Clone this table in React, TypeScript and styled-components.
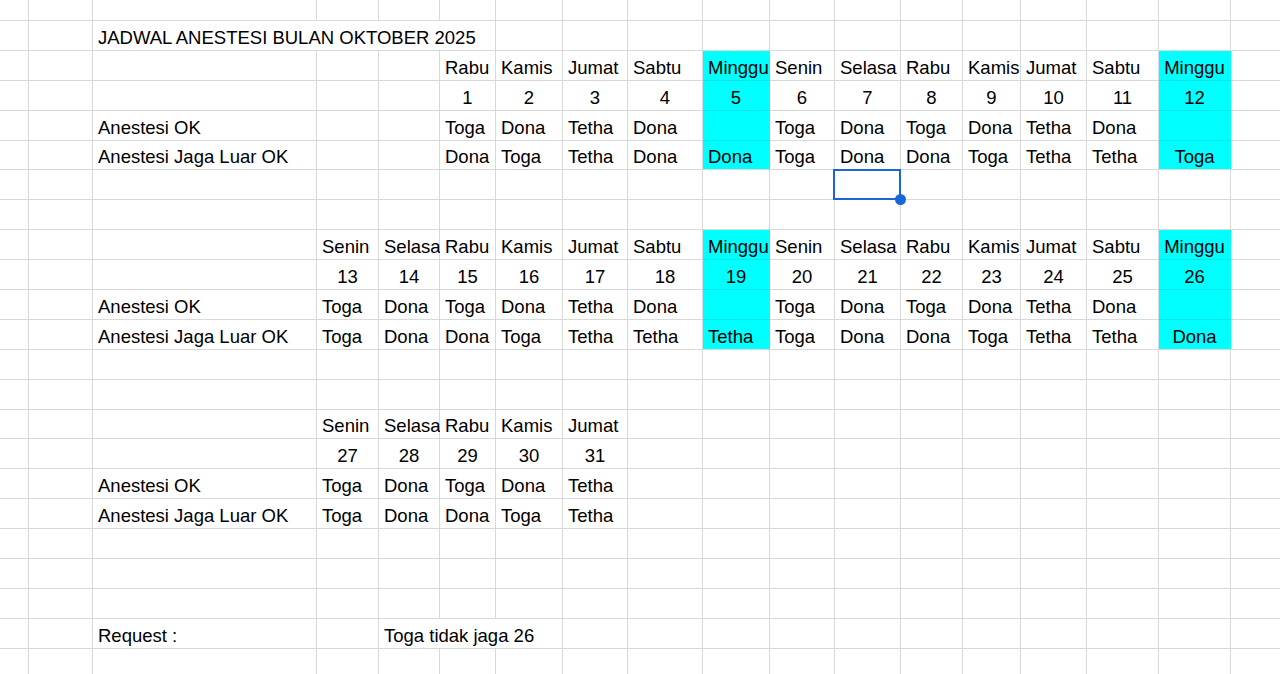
import React from "react";
import styled, { createGlobalStyle } from "styled-components";

const COLS = [29, 64, 224, 62, 61, 56, 67, 65, 75, 67, 65, 66, 62, 58, 66, 72, 72, 50];
const GRID = "#d9d9d9";
const CYAN = "#00ffff";

type Spec = {
  t?: string;
  a?: "l" | "c";
  cyan?: boolean;
  cyanEnd?: boolean;
  span?: number;
  sel?: boolean;
};

type Row = Record<number, Spec>;

const GlobalStyle = createGlobalStyle`
  html, body {
    margin: 0;
    padding: 0;
    background: #fff;
    overflow: hidden;
  }
  body {
    font-family: "Liberation Sans", Arial, Helvetica, sans-serif;
    color: #000;
  }
`;

const Sheet = styled.div`
  display: grid;
  grid-template-columns: ${COLS.map((w) => `${w}px`).join(" ")};
  grid-template-rows: 21px repeat(22, 29.9px);
  width: 1280px;
  height: 674px;
  overflow: hidden;
`;

const Cell = styled.div<{ $align: "l" | "c"; $cyan?: boolean; $cyanEnd?: boolean; $span: number }>`
  position: relative;
  box-sizing: border-box;
  grid-column: span ${(p) => p.$span};
  display: flex;
  align-items: flex-end;
  justify-content: ${(p) => (p.$align === "c" ? "center" : "flex-start")};
  padding: 0 1px 2px ${(p) => (p.$align === "c" ? "1px" : "5px")};
  border-right: 1px solid ${(p) => (p.$cyan ? CYAN : GRID)};
  border-bottom: 1px solid ${(p) => (p.$cyan && !p.$cyanEnd ? "#00e8e8" : GRID)};
  background: ${(p) => (p.$cyan ? CYAN : "#fff")};
  font-size: 18.5px;
  line-height: 20px;
  white-space: nowrap;
  overflow: visible;
`;

const Selection = styled.div`
  position: absolute;
  z-index: 2;
  left: -2px;
  top: -1px;
  right: -1px;
  bottom: -1px;
  border: 2px solid #1a66d6;
  pointer-events: none;
  &::after {
    content: "";
    position: absolute;
    right: -7px;
    bottom: -7px;
    width: 11px;
    height: 11px;
    border-radius: 50%;
    background: #1a66d6;
  }
`;

const block = (
  start: number,
  days: string[],
  nums: number[],
  ok: string[],
  luar: string[]
): Row[] => {
  const rows: Row[] = [{}, {}, { 2: { t: "Anestesi OK" } }, { 2: { t: "Anestesi Jaga Luar OK" } }];
  days.forEach((d, i) => {
    const col = start + i;
    const cyan = d === "Minggu";
    const center = cyan && col === 16;
    rows[0][col] = { t: d, cyan, a: center ? "c" : "l" };
    rows[1][col] = { t: String(nums[i]), cyan, a: "c" };
    rows[2][col] = { t: ok[i], cyan, a: center ? "c" : "l" };
    rows[3][col] = { t: luar[i], cyan, cyanEnd: true, a: center ? "c" : "l" };
  });
  return rows;
};

const ROWS: Row[] = [
  {},
  { 2: { t: "JADWAL ANESTESI BULAN OKTOBER 2025", span: 4 } },
  ...block(
    5,
    ["Rabu", "Kamis", "Jumat", "Sabtu", "Minggu", "Senin", "Selasa", "Rabu", "Kamis", "Jumat", "Sabtu", "Minggu"],
    [1, 2, 3, 4, 5, 6, 7, 8, 9, 10, 11, 12],
    ["Toga", "Dona", "Tetha", "Dona", "", "Toga", "Dona", "Toga", "Dona", "Tetha", "Dona", ""],
    ["Dona", "Toga", "Tetha", "Dona", "Dona", "Toga", "Dona", "Dona", "Toga", "Tetha", "Tetha", "Toga"]
  ),
  { 11: { sel: true } },
  {},
  ...block(
    3,
    ["Senin", "Selasa", "Rabu", "Kamis", "Jumat", "Sabtu", "Minggu", "Senin", "Selasa", "Rabu", "Kamis", "Jumat", "Sabtu", "Minggu"],
    [13, 14, 15, 16, 17, 18, 19, 20, 21, 22, 23, 24, 25, 26],
    ["Toga", "Dona", "Toga", "Dona", "Tetha", "Dona", "", "Toga", "Dona", "Toga", "Dona", "Tetha", "Dona", ""],
    ["Toga", "Dona", "Dona", "Toga", "Tetha", "Tetha", "Tetha", "Toga", "Dona", "Dona", "Toga", "Tetha", "Tetha", "Dona"]
  ),
  {},
  {},
  ...block(
    3,
    ["Senin", "Selasa", "Rabu", "Kamis", "Jumat"],
    [27, 28, 29, 30, 31],
    ["Toga", "Dona", "Toga", "Dona", "Tetha"],
    ["Toga", "Dona", "Dona", "Toga", "Tetha"]
  ),
  {},
  {},
  {},
  { 2: { t: "Request :" }, 4: { t: "Toga tidak jaga 26", span: 3 } },
  {},
];

const renderRow = (row: Row, r: number) => {
  const cells: React.ReactNode[] = [];
  let c = 0;
  while (c < COLS.length) {
    const s = row[c] || {};
    const span = s.span || 1;
    cells.push(
      <Cell key={`${r}-${c}`} $align={s.a || "l"} $cyan={s.cyan} $cyanEnd={s.cyanEnd} $span={span}>
        {s.t}
        {s.sel && <Selection />}
      </Cell>
    );
    c += span;
  }
  return cells;
};

const App = () => {
  return (
    <>
      <GlobalStyle />
      <Sheet>{ROWS.map((row, r) => renderRow(row, r))}</Sheet>
    </>
  );
};

export default App;
